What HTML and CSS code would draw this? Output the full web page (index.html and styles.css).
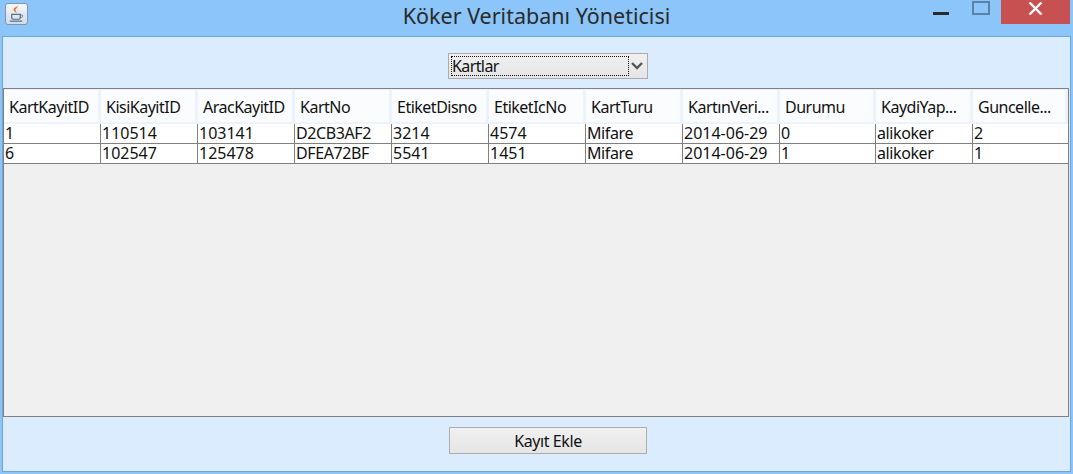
FILE: index.html
```html
<!DOCTYPE html>
<html lang="tr">
<head>
<meta charset="utf-8">
<title>Köker Veritabanı Yöneticisi</title>
<link rel="stylesheet" href="styles.css">
</head>
<body>
<div class="window">
  <header class="titlebar">
    <div class="tb-left">
      <div class="app-icon">
        <svg width="22" height="22" viewBox="0 0 22 22">
          <path d="M12.500 1.500c1 2.500-3 3.500-2.500 5.500.2 1 1 1.700 1.500 3-3-1.500-4-2.800-3.500-4.500.5-1.500 4.500-2 4.500-4z" fill="#e8792b"/>
          <path d="M14 5c-1.500 1-2.200 2.300-1.500 5-.6-2.300 0-3.800 1.500-5z" fill="#e8792b"/>
          <path d="M6 11.500h9v3.500c0 1-1 1.500-2 1.500H8c-1 0-2-.5-2-1.500z" fill="none" stroke="#4f7596" stroke-width="1.300"/>
          <path d="M15 12h1.500c1.500 0 1.500 2.500-1.500 2.800" fill="none" stroke="#4f7596"/>
          <path d="M4 18.500h13" stroke="#4f7596" stroke-width="1.300"/>
        </svg>
      </div>
    </div>
    <h1 class="title">Köker Veritabanı Yöneticisi</h1>
    <div class="controls">
      <span class="ctl-min"></span>
      <span class="ctl-max"></span>
      <span class="ctl-close">
        <svg width="15" height="13" viewBox="0 0 15 13"><path d="M1.500 0.500l12 12M13.500 0.500l-12 12" stroke="#fff" stroke-width="2.400" fill="none"/></svg>
      </span>
    </div>
  </header>
  <main class="panel">
    <div class="top-bar">
      <div class="combo">
        <span class="combo-value">Kartlar</span>
        <span class="combo-arrow">
          <svg width="12" height="8" viewBox="0 0 12 8"><path d="M1 1l5 5 5-5" fill="none" stroke="#555" stroke-width="2.400"/></svg>
        </span>
      </div>
    </div>
    <section class="table">
      <div class="row head">
        <div class="th">KartKayitID</div><div class="th">KisiKayitID</div><div class="th">AracKayitID</div><div class="th">KartNo</div><div class="th">EtiketDisno</div><div class="th">EtiketIcNo</div><div class="th">KartTuru</div><div class="th">KartınVeri...</div><div class="th">Durumu</div><div class="th">KaydiYap...</div><div class="th">Guncelle...</div>
      </div>
      <div class="row body">
        <div class="td num">1</div><div class="td num">110514</div><div class="td num">103141</div><div class="td">D2CB3AF2</div><div class="td num">3214</div><div class="td num">4574</div><div class="td">Mifare</div><div class="td num">2014-06-29</div><div class="td num">0</div><div class="td">alikoker</div><div class="td num">2</div>
      </div>
      <div class="row body">
        <div class="td num">6</div><div class="td num">102547</div><div class="td num">125478</div><div class="td">DFEA72BF</div><div class="td num">5541</div><div class="td num">1451</div><div class="td">Mifare</div><div class="td num">2014-06-29</div><div class="td num">1</div><div class="td">alikoker</div><div class="td num">1</div>
      </div>
    </section>
    <div class="bottom-bar">
      <button class="btn" type="button">Kayıt Ekle</button>
    </div>
  </main>
</div>
</body>
</html>
```
FILE: styles.css
```css
* { box-sizing: border-box; }
html, body { margin: 0; padding: 0; }
body { width: 1073px; height: 474px; overflow: hidden; background: #8bc5fa; font-family: "Noto Sans", Tahoma, sans-serif; color: #111; }
.window { width: 1073px; height: 474px; display: flex; flex-direction: column; padding: 0 2px 2px 2px; }

.titlebar { height: 36px; flex: none; display: grid; grid-template-columns: 1fr auto 1fr; align-items: start; }
.tb-left { padding: 3px 0 0 3px; }
.app-icon { width: 23px; height: 22px; border: 1px solid #7d97b0; border-radius: 3px; background: linear-gradient(#f6f8fb, #d4dbe3); display: flex; align-items: center; justify-content: center; }
.title { margin: 0; font-size: 21.500px; font-weight: 400; line-height: 32px; color: #2a2a2a; }
.controls { display: flex; justify-content: flex-end; align-items: flex-start; padding-right: 1px; }
.ctl-min { width: 16px; height: 3px; margin-top: 12px; background: #2a2a2a; margin-right: 23px; }
.ctl-max { width: 18px; height: 14px; margin-top: 1px; border: 2px solid #5b83a8; margin-right: 11px; }
.ctl-close { width: 69px; height: 24px; background: #c75050; display: flex; align-items: flex-start; justify-content: center; padding-top: 2px; }

.panel { flex: 1; display: flex; flex-direction: column; background: #dcecff; border: 1px solid #6ea6d8; }
.top-bar { height: 51px; flex: none; display: flex; justify-content: center; padding-top: 16px; padding-left: 23px; }
.combo { width: 200px; height: 26px; border: 1px solid #acacac; background: linear-gradient(#f0f0f0, #e5e5e5); display: flex; align-items: center; padding: 2px; }
.combo-value { width: 178px; height: 20px; border: 1px dotted #111; font-size: 16px; letter-spacing: -0.6px; line-height: 19px; padding-left: 0; }
.combo-arrow { flex: 1; display: flex; justify-content: center; }

.table { width: 1066px; height: 329px; flex: none; border: 1px solid #808080; background: #f0f0f0; }
.row { display: grid; grid-template-columns: repeat(8, 97px) 96px 97px 95px; }
.head { height: 35px; background: #edf3fc; }
.th { height: 32px; margin: 1px 3px 2px 0; background: #fbfcfe; font-size: 16px; letter-spacing: -0.5px; line-height: 34px; padding-left: 5px; white-space: nowrap; }
.body { height: 20px; background: #fff; border-bottom: 1px solid #808080; }
.td { height: 19px; border-right: 1px solid #808080; font-size: 16px; letter-spacing: -0.4px; line-height: 19px; padding-left: 1px; white-space: nowrap; }
.num { letter-spacing: 0; }
.td:last-child { border-right: 0; }

.bottom-bar { flex: 1; display: flex; justify-content: center; padding-top: 10px; padding-left: 23px; }
.btn { width: 198px; height: 27px; border: 1px solid #acacac; background: linear-gradient(#f0f0f0, #e5e5e5); font-family: inherit; font-size: 16px; letter-spacing: -0.4px; color: #111; padding: 0; }
```
